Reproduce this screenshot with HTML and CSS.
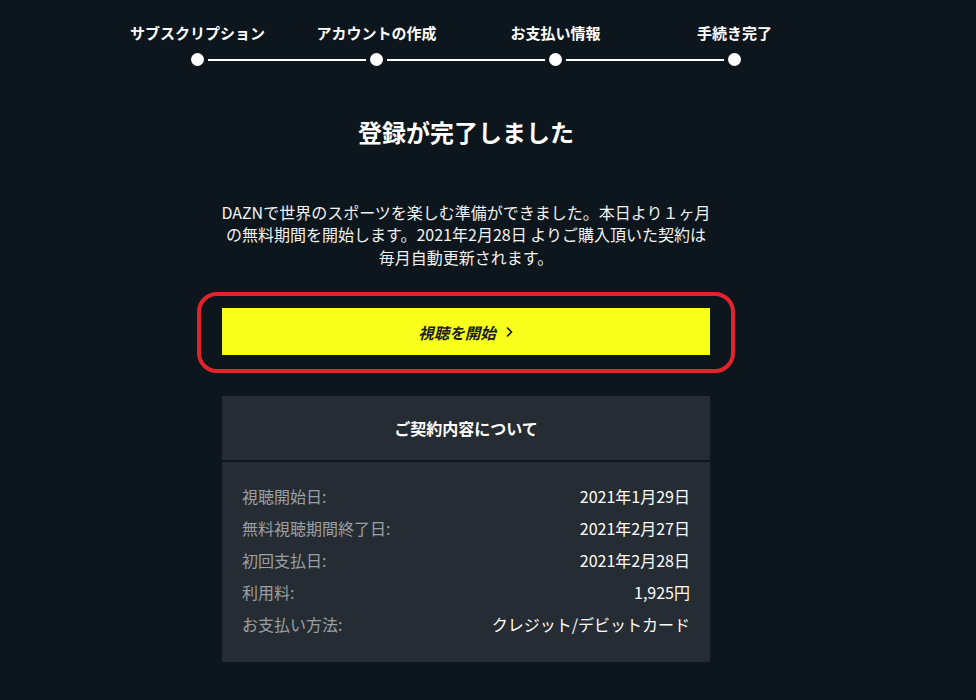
FILE: index.html
```html
<!DOCTYPE html>
<html lang="ja">
<head>
    <meta charset="utf-8">
    <meta name="viewport" content="width=device-width, initial-scale=1">
    <link rel="stylesheet" href="styles.css">
</head>
<body>
    <div class="page">
        <div class="stepper">
            <div class="step-labels">
                <span>サブスクリプション</span>
                <span>アカウントの作成</span>
                <span>お支払い情報</span>
                <span>手続き完了</span>
            </div>
            <div class="step-track">
                <span class="dot"></span>
                <span class="bar"></span>
                <span class="dot"></span>
                <span class="bar"></span>
                <span class="dot"></span>
                <span class="bar"></span>
                <span class="dot"></span>
            </div>
        </div>

        <div class="content">
            <h1>登録が完了しました</h1>
            <p class="lead">DAZNで世界のスポーツを楽しむ準備ができました。本日より１ヶ月<br>の無料期間を開始します。2021年2月28日 よりご購入頂いた契約は<br>毎月自動更新されます。</p>

            <a href="#" class="start-button">
                <span>視聴を開始</span>
                <svg class="chevron" width="10" height="12" viewBox="0 0 10 12"><path d="M3 1.5 L7.5 6 L3 10.5" fill="none" stroke="#1b1d1f" stroke-width="1.6"/></svg>
            </a>

            <div class="card">
                <div class="card-header">ご契約内容について</div>
                <div class="card-body">
                    <div class="row"><span class="label">視聴開始日:</span><span class="value">2021年1月29日</span></div>
                    <div class="row"><span class="label">無料視聴期間終了日:</span><span class="value">2021年2月27日</span></div>
                    <div class="row"><span class="label">初回支払日:</span><span class="value">2021年2月28日</span></div>
                    <div class="row"><span class="label">利用料:</span><span class="value">1,925円</span></div>
                    <div class="row"><span class="label">お支払い方法:</span><span class="value">クレジット/デビットカード</span></div>
                </div>
            </div>
        </div>
    </div>
</body>
</html>
```

FILE: styles.css
```css
body {
    margin: 0;
    padding: 0;
    background-color: #0c161c;
    color: #fff;
    font-family: "Noto Sans CJK JP", "Noto Sans", sans-serif;
    height: 700px;
    overflow: hidden;
}

.page {
    width: 932px;
}

.stepper {
    width: 716px;
    margin: 0 auto;
    padding-top: 23px;
}

.step-labels {
    display: grid;
    grid-template-columns: repeat(4, 1fr);
    text-align: center;
    font-size: 15px;
    font-weight: bold;
    line-height: 20px;
}

.step-track {
    display: flex;
    align-items: center;
    margin: 10px 83px 0;
}

.dot {
    width: 13px;
    height: 13px;
    border-radius: 50%;
    background-color: #fff;
    flex-shrink: 0;
}

.bar {
    flex: 1;
    height: 2px;
    background-color: #fff;
    margin: 0 4px;
}

.content {
    width: 488px;
    margin: 0 auto;
    text-align: center;
}

h1 {
    font-size: 24px;
    font-weight: bold;
    line-height: 32px;
    margin: 50px 0 0;
}

.lead {
    margin: 53px -30px 0;
    font-size: 16px;
    line-height: 22.4px;
    white-space: nowrap;
    color: #f2f2f2;
}

.start-button {
    position: relative;
    display: flex;
    justify-content: center;
    align-items: center;
    gap: 8px;
    height: 47px;
    margin-top: 40px;
    background-color: #f7ff1a;
    color: #1b1d1f;
    text-decoration: none;
    font-size: 15.5px;
    font-weight: bold;
    font-style: italic;
}

.start-button::before {
    content: "";
    position: absolute;
    left: -25px;
    right: -25px;
    top: -16px;
    bottom: -18px;
    border: 4px solid #e3232b;
    border-radius: 20px;
}

.card {
    margin-top: 41px;
    background-color: #252c33;
}

.card-header {
    height: 64px;
    line-height: 64px;
    font-size: 16px;
    font-weight: bold;
    border-bottom: 2px solid #0c161c;
}

.card-body {
    padding: 18px 20px 22px;
}

.row {
    display: flex;
    justify-content: space-between;
    align-items: center;
    height: 32px;
    font-size: 16px;
}

.label {
    color: #9ba0a5;
}

.value {
    color: #fff;
}
```
